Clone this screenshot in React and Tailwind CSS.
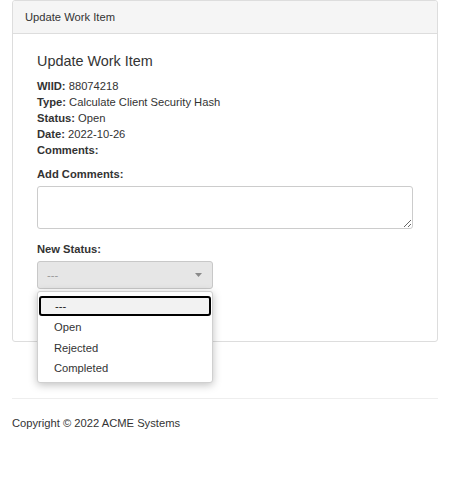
import React from "react";

export default function App() {
  return (
    <div
      className="px-[12px] text-[11.2px] leading-[16px] text-[#333]"
      style={{ fontFamily: '"Liberation Sans", Arial, sans-serif' }}
    >
      <div className="rounded-[3px] border border-[#ddd] bg-white">
        <div className="flex h-[33px] items-center rounded-t-[3px] border-b border-[#ddd] bg-[#f5f5f5] px-[12px]">
          Update Work Item
        </div>
        <div className="px-[24px] pt-[12px] pb-[12px]">
          <h4 className="mt-[7px] mb-[9px] text-[14.4px] leading-[16px] font-normal">
            Update Work Item
          </h4>
          <div>
            <b>WIID:</b> 88074218
          </div>
          <div>
            <b>Type:</b> Calculate Client Security Hash
          </div>
          <div>
            <b>Status:</b> Open
          </div>
          <div>
            <b>Date:</b> 2022-10-26
          </div>
          <div>
            <b>Comments:</b>
          </div>
          <div className="mt-[8px] mb-[4px] font-bold">Add Comments:</div>
          <textarea className="block h-[43px] w-full rounded-[3px] border border-[#ccc] bg-white outline-none" />
          <div className="mt-[12px] mb-[4px] font-bold">New Status:</div>
          <div className="relative w-[176px]">
            <div className="flex h-[28px] items-center justify-between rounded-[3px] border border-[#c8c8c8] bg-[#e6e6e6] pl-[9px] pr-[10px] text-[#9a9a9a]">
              <span>---</span>
              <svg width="7" height="4" viewBox="0 0 7 4">
                <path d="M0 0 L7 0 L3.5 4 Z" fill="#8a8a8a" />
              </svg>
            </div>
            <div className="absolute left-0 top-[30px] z-10 w-[176px] rounded-[3px] border border-[#d0d0d0] bg-white pt-[4px] pb-[4px] shadow-[0_2px_8px_rgba(0,0,0,0.25)]">
              <div className="mx-[1px] flex h-[20px] items-center rounded-[3px] border-2 border-black bg-[#f2f2f2] pl-[14px] text-[#222]">
                ---
              </div>
              <div className="flex h-[21px] items-center pl-[16px]">Open</div>
              <div className="flex h-[21px] items-center pl-[16px]">Rejected</div>
              <div className="flex h-[20px] items-center pl-[16px]">Completed</div>
            </div>
          </div>
          <div className="h-[40px]" />
        </div>
      </div>
      <div className="mt-[56px] border-t border-[#eee] pt-[16px]">
        Copyright © 2022 ACME Systems
      </div>
    </div>
  );
}
